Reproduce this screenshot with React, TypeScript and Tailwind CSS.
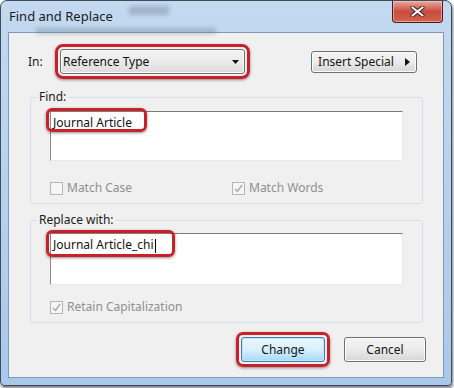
import React from 'react';

function Checkbox({ checked, label }: { checked?: boolean; label: string }) {
  return (
    <div className="flex items-center gap-[4px]">
      <div className="w-[13px] h-[13px] border border-[#b5b5b5] bg-[#f6f6f6] flex items-center justify-center">
        {checked && (
          <svg width="9" height="9" viewBox="0 0 9 9">
            <path d="M1 5 L3.5 7.5 L8 1" fill="none" stroke="#a9a9a9" strokeWidth="1.4" />
          </svg>
        )}
      </div>
      <span className="text-[#8f8f8f]">{label}</span>
    </div>
  );
}

function Highlight({ className }: { className: string }) {
  return (
    <div
      className={`pointer-events-none absolute border-[3px] border-[#c9202b] rounded-[6px] shadow-[0_1px_3px_rgba(0,0,0,0.45)] ${className}`}
    />
  );
}

function TextBox({ value, caret, height, hl }: { value: string; caret?: boolean; height: string; hl: string }) {
  return (
    <div
      className={`relative w-[353px] ${height} bg-white border border-t-[#7b7b7b] border-l-[#8a8a8a] border-r-[#e3e9ef] border-b-[#e3e9ef] pl-[2px] pt-[2px]`}
    >
      <span className="text-[#111] leading-[16px]">{value}</span>
      {caret && <span className="inline-block w-px h-[14px] bg-black align-middle ml-px" />}
      <Highlight className={hl} />
    </div>
  );
}

function Button({ label, isDefault, arrow, className }: { label: string; isDefault?: boolean; arrow?: boolean; className: string }) {
  return (
    <button
      className={`flex items-center justify-center rounded-[3px] border ${
        isDefault
          ? 'border-[#3c7fb1] bg-gradient-to-b from-[#eaf6fd] via-[#d9f0fc] to-[#a7d9f5] shadow-[inset_0_0_0_1px_#bfe6f8]'
          : 'border-[#707070] bg-gradient-to-b from-[#f4f4f4] via-[#ebebeb] to-[#d6d6d6] shadow-[inset_0_0_0_1px_#fcfcfc]'
      } text-[#151515] ${className}`}
    >
      <span>{label}</span>
      {arrow && (
        <svg width="5" height="8" viewBox="0 0 5 8" className="ml-[11px]">
          <path d="M0 0 L5 4 L0 8 Z" fill="#111" />
        </svg>
      )}
    </button>
  );
}

export default function App() {
  return (
    <div className="w-[454px] h-[388px] bg-white overflow-hidden font-['Noto_Sans',sans-serif] text-[12px]">
      <div className="relative w-[452px] h-[386px] flex flex-col px-[7px] pb-[7px] rounded-t-[7px] rounded-b-[4px] border border-[#3f4c5d] bg-gradient-to-b from-[#c3d9f0] via-[#b7d1ed] to-[#a9c8ea] shadow-[1px_2px_3px_rgba(0,0,0,0.55)]">
        {/* glass smudges */}
        <div className="absolute left-[128px] top-[5px] w-[40px] h-[9px] bg-[#6f7f92]/40 blur-[2px]" />
        <div className="absolute left-[35px] top-[27px] w-[180px] h-[6px] bg-[#6f7f92]/40 blur-[2px]" />

        <div className="relative h-[31px] flex items-start justify-between">
          <span className="pl-[1px] pt-[6px] text-[13px] leading-[18px] text-[#1a1a1a]">Find and Replace</span>
          <div className="mr-[1px] w-[51px] h-[22px] rounded-b-[4px] border border-t-0 border-[#4b1b16] bg-gradient-to-b from-[#e9a99e] via-[#c94a40] to-[#d0664a] shadow-[inset_0_0_0_1px_rgba(255,220,210,0.5)] flex items-center justify-center">
            <svg width="15" height="11" viewBox="0 0 15 11">
              <path d="M2.5 1.5 L12.5 9.5 M12.5 1.5 L2.5 9.5" stroke="#3b1c18" strokeWidth="4" strokeLinecap="round" />
              <path d="M2.5 1.5 L12.5 9.5 M12.5 1.5 L2.5 9.5" stroke="#ffffff" strokeWidth="2.2" strokeLinecap="round" />
            </svg>
          </div>
        </div>

        <div className="flex-1 flex flex-col bg-[#f0f0f0] border border-[#7f98b7]">
          {/* In row */}
          <div className="flex items-center pl-[19px] pr-[26px] mt-[11px]">
            <span className="w-[27px] text-[#1a1a1a]">In:</span>
            <div className="w-[195px] h-[35px] border-[3px] border-[#c9202b] rounded-[8px] p-[2px] shadow-[0_1px_3px_rgba(0,0,0,0.45)]">
              <div className="h-full flex items-center justify-between pl-[2px] pr-[5px] rounded-[3px] border border-[#707070] bg-gradient-to-b from-[#f2f2f2] via-[#ebebeb] to-[#dcdcdc] shadow-[inset_0_0_0_1px_#fbfbfb]">
                <span className="text-[#111]">Reference Type</span>
                <svg width="7" height="4" viewBox="0 0 7 4">
                  <path d="M0 0 L7 0 L3.5 4 Z" fill="#111" />
                </svg>
              </div>
            </div>
            <Button label="Insert Special" arrow className="ml-auto w-[106px] h-[22px]" />
          </div>

          {/* Find group */}
          <fieldset className="ml-[21px] mt-[10px] w-[393px] border border-[#d5dfe5] rounded-[3px]">
            <legend className="ml-[6px] px-[2px] leading-[16px] text-[#1a1a1a]">Find:</legend>
            <div className="pl-[19px] pt-[6px] pb-[6px]">
              <TextBox value="Journal Article" height="h-[50px]" hl="-left-[5px] -top-[4px] w-[101px] h-[24px]" />
              <div className="flex mt-[18px]">
                <div className="w-[182px]">
                  <Checkbox label="Match Case" />
                </div>
                <Checkbox checked label="Match Words" />
              </div>
            </div>
          </fieldset>

          {/* Replace group */}
          <fieldset className="ml-[21px] mt-[8px] w-[393px] border border-[#d5dfe5] rounded-[3px]">
            <legend className="ml-[6px] px-[2px] leading-[16px] text-[#1a1a1a]">Replace with:</legend>
            <div className="pl-[19px] pt-[5px] pb-[6px]">
              <TextBox value="Journal Article_chi" caret height="h-[52px]" hl="-left-[5px] -top-[4px] w-[129px] h-[27px]" />
              <div className="mt-[13px]">
                <Checkbox checked label="Retain Capitalization" />
              </div>
            </div>
          </fieldset>

          {/* Buttons */}
          <div className="flex items-center justify-end pr-[17px] mt-[9px]">
            <div className="w-[94px] h-[35px] border-[3px] border-[#c9202b] rounded-[7px] p-[2px] shadow-[0_1px_3px_rgba(0,0,0,0.45)]">
              <Button label="Change" isDefault className="w-full h-full" />
            </div>
            <Button label="Cancel" className="ml-[14px] w-[82px] h-[25px]" />
          </div>
        </div>
      </div>
    </div>
  );
}
